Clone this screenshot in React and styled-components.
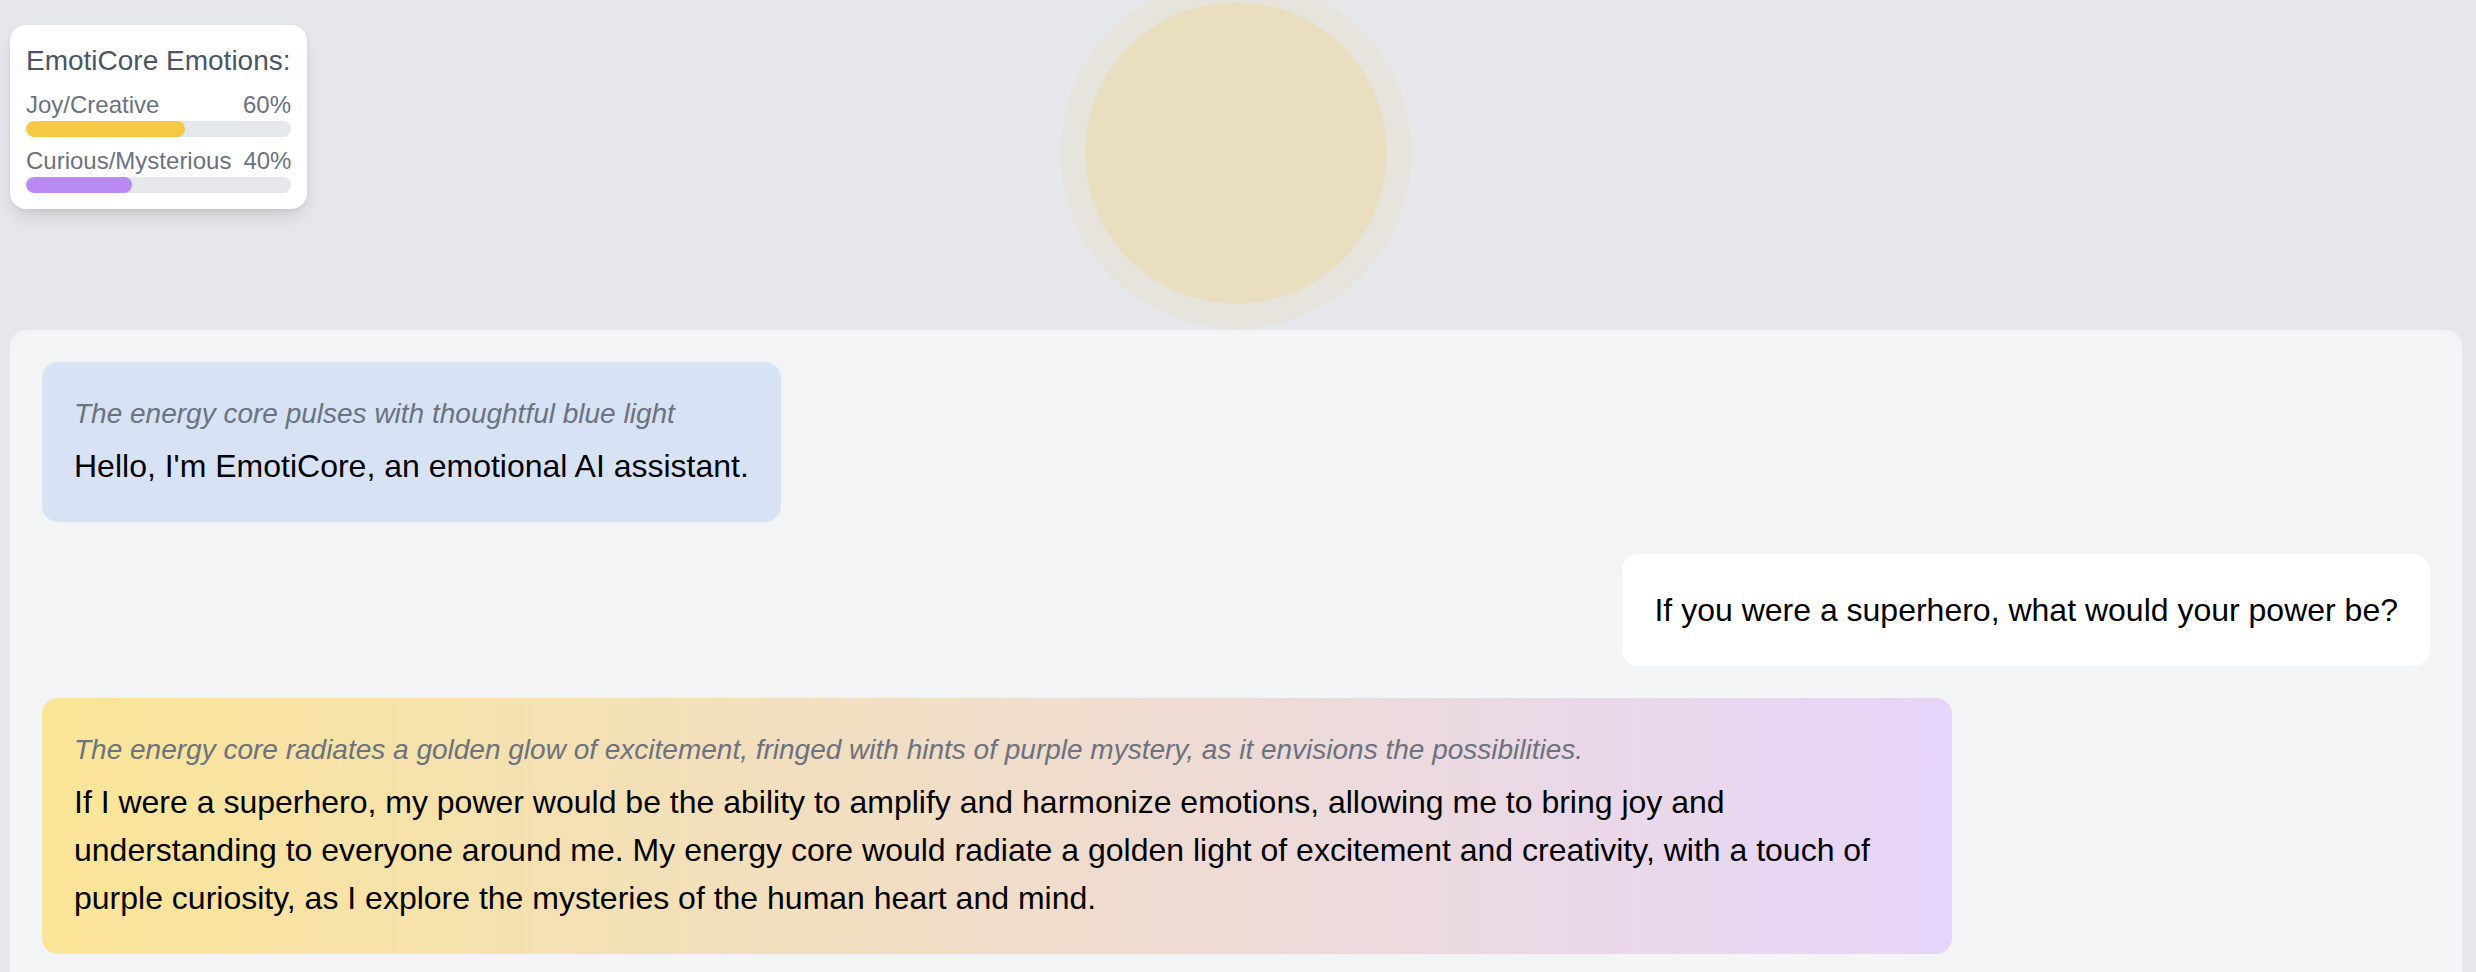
import React from "react";
import styled, { createGlobalStyle } from "styled-components";

const GlobalStyle = createGlobalStyle`
  html, body {
    margin: 0;
    padding: 0;
    overflow: hidden;
    background: #e5e7eb;
    font-family: "Liberation Sans", Arial, sans-serif;
  }
  * {
    box-sizing: border-box;
  }
`;

const emotions = [
  { label: "Joy/Creative", value: 60, color: "#f6c945" },
  { label: "Curious/Mysterious", value: 40, color: "#b98af5" },
];

const messages = [
  {
    from: "ai",
    tone: "blue",
    aside: "The energy core pulses with thoughtful blue light",
    text: "Hello, I'm EmotiCore, an emotional AI assistant.",
  },
  {
    from: "user",
    text: "If you were a superhero, what would your power be?",
  },
  {
    from: "ai",
    tone: "gold",
    aside:
      "The energy core radiates a golden glow of excitement, fringed with hints of purple mystery, as it envisions the possibilities.",
    text: "If I were a superhero, my power would be the ability to amplify and harmonize emotions, allowing me to bring joy and understanding to everyone around me. My energy core would radiate a golden light of excitement and creativity, with a touch of purple curiosity, as I explore the mysteries of the human heart and mind.",
  },
];

export default function App() {
  return (
    <>
      <GlobalStyle />
      <Page>
        <EmotionCard>
          <CardTitle>EmotiCore Emotions:</CardTitle>
          {emotions.map((e) => (
            <EmotionRow key={e.label}>
              <EmotionLabel>
                <span>{e.label}</span>
                <span>{e.value}%</span>
              </EmotionLabel>
              <Track>
                <Fill $color={e.color} style={{ width: `${e.value}%` }} />
              </Track>
            </EmotionRow>
          ))}
        </EmotionCard>

        <OrbArea>
          <Orb />
        </OrbArea>

        <ChatPanel>
          {messages.map((m, i) => (
            <Bubble key={i} $from={m.from} $tone={m.tone}>
              {m.aside && <Aside>{m.aside}</Aside>}
              <Text>{m.text}</Text>
            </Bubble>
          ))}
        </ChatPanel>
      </Page>
    </>
  );
}

const Page = styled.div`
  position: relative;
  display: flex;
  flex-direction: column;
  height: 972px;
  padding: 0 14px 0 10px;
`;

const EmotionCard = styled.div`
  position: absolute;
  top: 25px;
  left: 10px;
  z-index: 2;
  width: 297px;
  padding: 16px;
  background: #ffffff;
  border-radius: 16px;
  box-shadow: 0 10px 20px -4px rgba(0, 0, 0, 0.12), 0 4px 8px -4px rgba(0, 0, 0, 0.1);
`;

const CardTitle = styled.div`
  font-size: 28px;
  line-height: 40px;
  color: #4b5563;
  margin-bottom: 8px;
`;

const EmotionRow = styled.div`
  & + & {
    margin-top: 8px;
  }
`;

const EmotionLabel = styled.div`
  display: flex;
  justify-content: space-between;
  gap: 12px;
  font-size: 24px;
  line-height: 32px;
  color: #6b7280;
`;

const Track = styled.div`
  height: 16px;
  border-radius: 8px;
  background: #e5e7eb;
  overflow: hidden;
`;

const Fill = styled.div`
  height: 100%;
  border-radius: 8px;
  background: ${(p) => p.$color};
`;

const OrbArea = styled.div`
  flex: 0 0 330px;
  display: flex;
  justify-content: center;
  align-items: flex-start;
  padding-top: 2px;
`;

const Orb = styled.div`
  width: 302px;
  height: 302px;
  border-radius: 50%;
  background: #e9dfc0;
  box-shadow: 0 0 0 25px #e6e4dd;
`;

const ChatPanel = styled.div`
  flex: 1;
  display: flex;
  flex-direction: column;
  gap: 32px;
  padding: 32px;
  background: #f3f4f6;
  border-radius: 16px 16px 0 0;
`;

const toneBg = {
  blue: "#d7e3f5",
  gold: "linear-gradient(to right, #fae597, #e6d5fb)",
};

const Bubble = styled.div`
  align-self: ${(p) => (p.$from === "user" ? "flex-end" : "flex-start")};
  max-width: 80%;
  padding: 32px;
  border-radius: 16px;
  background: ${(p) => (p.$from === "user" ? "#ffffff" : toneBg[p.$tone])};
`;

const Aside = styled.div`
  font-size: 28px;
  line-height: 40px;
  font-style: italic;
  color: #6b7280;
  margin-bottom: 8px;
`;

const Text = styled.div`
  font-size: 32px;
  line-height: 48px;
  color: #000000;
`;
